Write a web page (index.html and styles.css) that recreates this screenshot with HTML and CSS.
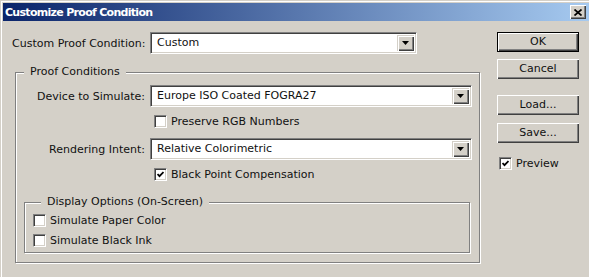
FILE: index.html
```html
<!DOCTYPE html>
<html lang="en">
<head>
  <meta charset="UTF-8">
  <title>Customize Proof Condition</title>
  <link rel="stylesheet" href="styles.css">
</head>
<body>
  <div class="window">
    <!-- Title bar -->
    <div class="titlebar">
      <span class="title">Customize Proof Condition</span>
      <span class="close">
        <svg width="8" height="7" viewBox="0 0 8 7"><path d="M0.5 0.5 L7.5 6.5 M7.5 0.5 L0.5 6.5" stroke="#000" stroke-width="1.7" fill="none"/></svg>
      </span>
    </div>

    <div class="dialog">
      <div class="main">
        <div class="row-top">
          <label class="lbl top-lbl">Custom Proof Condition:</label>
          <div class="select short">
            <span class="value">Custom</span>
            <span class="arrow"><svg width="7" height="4" viewBox="0 0 7 4"><path d="M0 0 H7 L3.5 4 Z" fill="#000"/></svg></span>
          </div>
        </div>

        <fieldset class="group proof">
          <legend>Proof Conditions</legend>
          <div class="grid">
            <label class="lbl">Device to Simulate:</label>
            <div class="select">
              <span class="value">Europe ISO Coated FOGRA27</span>
              <span class="arrow"><svg width="7" height="4" viewBox="0 0 7 4"><path d="M0 0 H7 L3.5 4 Z" fill="#000"/></svg></span>
            </div>
            <div></div>
            <div class="check first"><span class="box"></span>Preserve RGB Numbers</div>

            <label class="lbl">Rendering Intent:</label>
            <div class="select">
              <span class="value">Relative Colorimetric</span>
              <span class="arrow"><svg width="7" height="4" viewBox="0 0 7 4"><path d="M0 0 H7 L3.5 4 Z" fill="#000"/></svg></span>
            </div>
            <div></div>
            <div class="check second"><span class="box checked"><svg width="7" height="7" viewBox="0 0 7 7"><path d="M0.5 3 L2.5 5.2 L6.5 1" stroke="#000" stroke-width="1.8" fill="none"/></svg></span>Black Point Compensation</div>
          </div>

          <fieldset class="group display">
            <legend>Display Options (On-Screen)</legend>
            <div class="check"><span class="box"></span>Simulate Paper Color</div>
            <div class="check"><span class="box"></span>Simulate Black Ink</div>
          </fieldset>
        </fieldset>
      </div>

      <div class="side">
        <div class="btn default">OK</div>
        <div class="btn cancel">Cancel</div>
        <div class="btn load">Load...</div>
        <div class="btn save">Save...</div>
        <div class="check preview"><span class="box checked"><svg width="7" height="7" viewBox="0 0 7 7"><path d="M0.5 3 L2.5 5.2 L6.5 1" stroke="#000" stroke-width="1.8" fill="none"/></svg></span>Preview</div>
      </div>
    </div>
  </div>
</body>
</html>
```

FILE: styles.css
```css
body {
  margin: 0;
  font-family: "DejaVu Sans", sans-serif;
  font-size: 11px;
  color: #111;
  background: #d4d0c8;
}
.window {
  width: 589px;
  height: 277px;
  box-sizing: border-box;
  background: #d4d0c8;
  border-left: 1px solid #d4d0c8;
  border-top: 1px solid #d4d0c8;
  box-shadow: inset 1px 1px #fff;
  padding: 2px 0 0 2px;
  overflow: hidden;
}
.titlebar {
  display: flex;
  align-items: center;
  height: 18px;
  padding: 0 3px 0 2px;
  background: linear-gradient(to right, #0a246a, #a6caf0);
}
.title {
  color: #fff;
  font-weight: bold;
  letter-spacing: -0.7px;
}
.close {
  margin-left: auto;
  width: 16px;
  height: 14px;
  display: flex;
  align-items: center;
  justify-content: center;
  background: #d4d0c8;
  box-shadow: inset 1px 1px #fff, inset -1px -1px #404040, inset -2px -2px #808080;
}
.dialog {
  display: flex;
  padding: 11px 0 0 9px;
}
.main {
  width: 468px;
}
.row-top {
  display: flex;
  align-items: center;
  gap: 5px;
}
.lbl {
  text-align: right;
  align-self: center;
  white-space: nowrap;
}
.top-lbl {
  width: 133px;
}
.select {
  display: flex;
  height: 22px;
  box-sizing: border-box;
  background: #fff;
  border: 1px solid;
  border-color: #808080 #fff #fff #808080;
  box-shadow: inset 1px 1px #404040, inset -1px -1px #d4d0c8;
  padding: 2px;
}
.select.short {
  width: 267px;
}
.value {
  flex: 1;
  padding-left: 4px;
  line-height: 16px;
}
.arrow {
  width: 17px;
  display: flex;
  align-items: center;
  justify-content: center;
  background: #d4d0c8;
  box-shadow: inset 1px 1px #d4d0c8, inset 2px 2px #fff, inset -1px -1px #404040, inset -2px -2px #808080;
}
.group {
  margin: 0;
  padding: 0;
  min-width: 0;
  box-sizing: border-box;
  border: 1px solid #808080;
  box-shadow: inset 1px 1px #fff, 1px 1px #fff;
}
.group legend {
  margin-left: 8px;
  padding: 0 6px;
  line-height: 16px;
  background: #d4d0c8;
}
.proof {
  width: 465px;
  margin: 10px 0 0 3px;
  padding-bottom: 9px;
}
.grid {
  display: grid;
  grid-template-columns: 129px 322px;
  column-gap: 5px;
  margin-top: 5px;
}
.check {
  display: flex;
  align-items: center;
  gap: 4px;
  height: 16px;
}
.grid .check {
  padding-left: 4px;
}
.check.first {
  margin: 6px 0 9px;
}
.check.second {
  margin-top: 6px;
}
.box {
  width: 13px;
  height: 13px;
  box-sizing: border-box;
  display: flex;
  align-items: center;
  justify-content: center;
  background: #fff;
  border: 1px solid;
  border-color: #808080 #fff #fff #808080;
  box-shadow: inset 1px 1px #404040, inset -1px -1px #d4d0c8;
}
.display {
  margin: 12px 9px 0 8px;
  padding: 2px 0 4px 8px;
  display: flex;
  flex-direction: column;
  gap: 4px;
}
.side {
  width: 82px;
  margin-left: 17px;
  display: flex;
  flex-direction: column;
}
.btn {
  height: 20px;
  line-height: 20px;
  text-align: center;
  box-sizing: border-box;
  background: #d4d0c8;
  box-shadow: inset 1px 1px #fff, inset -1px -1px #404040, inset -2px -2px #808080;
}
.btn.default {
  border: 1px solid #000;
  line-height: 18px;
}
.cancel {
  margin-top: 7px;
}
.load {
  margin-top: 16px;
}
.save {
  margin-top: 8px;
}
.preview {
  margin-top: 12px;
  padding-left: 2px;
}
```
